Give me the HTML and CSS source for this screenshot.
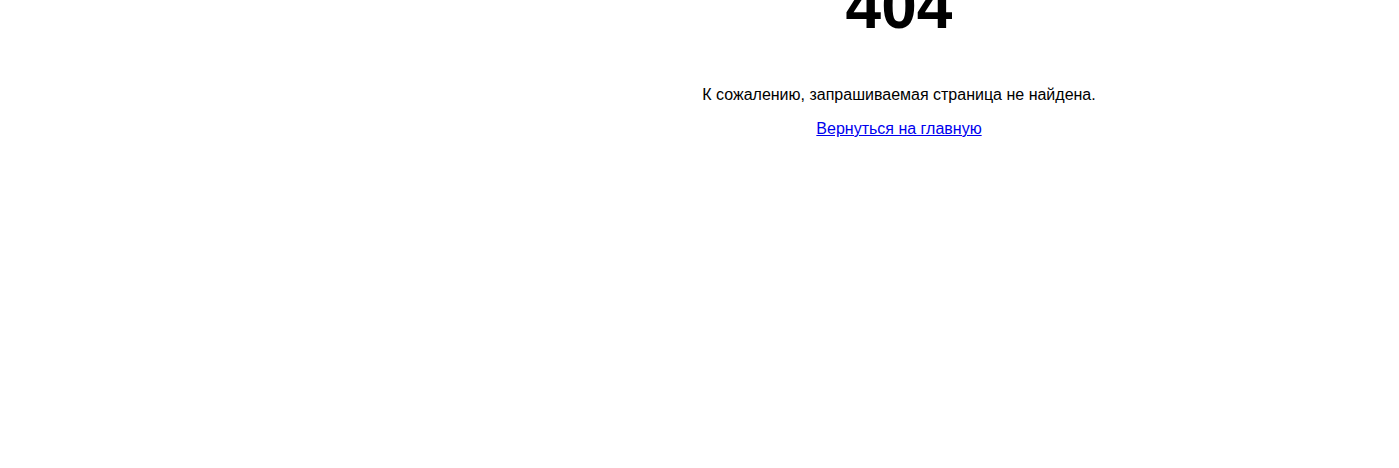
FILE: index.html
```html
<!DOCTYPE html>
<html lang="ru">
<head>
    <meta charset="UTF-8">
    <meta name="viewport" content="width=device-width, initial-scale=1.0">
    <title>Страница не найдена</title>
    <link rel="stylesheet" href="styles.css">
</head>
<body>
    <div class="layout">
        <aside class="sidebar"></aside>
        <main class="not-found">
            <h1>404</h1>
            <p>К сожалению, запрашиваемая страница не найдена.</p>
            <p><a href="/">Вернуться на главную</a></p>
        </main>
    </div>
</body>
</html>
```

FILE: styles.css
```css
body {
    font-family: 'Liberation Sans', Arial, sans-serif;
    font-size: 16px;
    margin: 0;
    background: #fff;
    color: #000;
}

.layout {
    display: flex;
}

.sidebar {
    width: 399px;
    flex-shrink: 0;
}

.not-found {
    flex: 1;
    text-align: center;
}

.not-found h1 {
    font-size: 64px;
    margin: -31px 0 43px;
}

.not-found p {
    margin: 16px 0;
}

.not-found a {
    color: #0000ee;
}
```
